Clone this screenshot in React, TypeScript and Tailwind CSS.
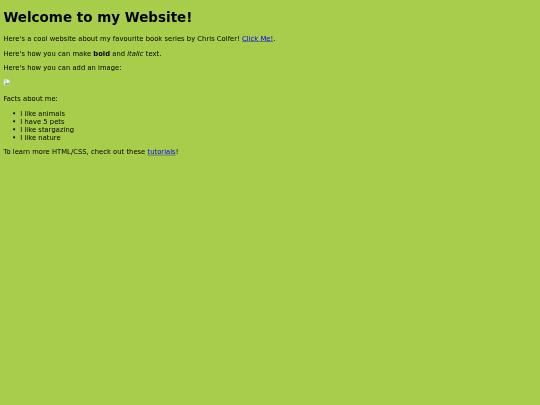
export default function App() {
    return (
        <div className="h-[405px] w-[540px] overflow-hidden bg-[#a8cd4b]">
            <div className="w-[1280px] origin-top-left scale-[0.421875] blur-[0.5px] px-2 pt-[22px] text-[16px] leading-[19px] tracking-[0.08px] text-black font-['DejaVu_Sans',sans-serif]">
                <h1 className="mb-[22.5px] text-[32px] leading-[37px] tracking-normal font-bold">Welcome to my Website!</h1>
                <p className="mb-4">
                    Here's a cool website about my favourite book series by Chris Colfer!{" "}
                    <a href="#" className="text-[#0000ee] underline">Click Me!</a>.
                </p>
                <p className="mb-4">
                    Here's how you can make <b>bold</b> and <i>italic</i> text.
                </p>
                <p className="mb-4">Here's how you can add an image:</p>
                <p className="mb-4 h-[21px]">
                    <svg width="16" height="16" viewBox="0 0 8 8" className="inline align-baseline">
                        <path d="M0.5 0.5H5.5L7.5 2.5V7.5H0.5Z" fill="#f4f6f2" stroke="#b9c4b0" strokeWidth="0.6" />
                        <path d="M1 7L3.5 4L5 5.5L7 4V7Z" fill="#7fae6a" />
                        <path d="M1.5 1.5H3.5V3H1.5Z" fill="#8fb5e8" />
                    </svg>
                </p>
                <p className="mb-4">Facts about me:</p>
                <ul className="mb-4 list-disc pl-10">
                    <li>I like animals</li>
                    <li>I have 5 pets</li>
                    <li>I like stargazing</li>
                    <li>I like nature</li>
                </ul>
                <p>
                    To learn more HTML/CSS, check out these{" "}
                    <a href="#" className="text-[#0000ee] underline">tutorials</a>!
                </p>
            </div>
        </div>
    )
}
